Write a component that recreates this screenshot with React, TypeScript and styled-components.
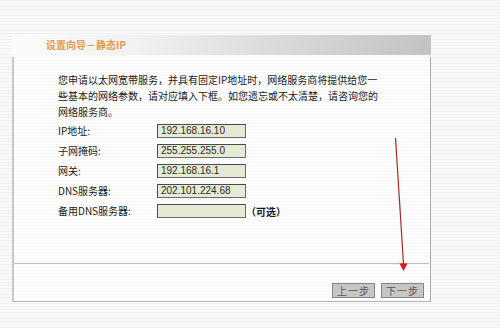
import React from "react";
import styled, { createGlobalStyle } from "styled-components";

const GlobalStyle = createGlobalStyle`
  html, body {
    margin: 0;
    padding: 0;
    width: 500px;
    height: 328px;
    overflow: hidden;
    background: repeating-linear-gradient(to bottom, #efefef 0px, #efefef 1px, #fafafa 1px, #fafafa 3px);
    font-family: "Noto Sans CJK SC", "Liberation Sans", sans-serif;
  }
  #root { position: relative; width: 500px; height: 328px; }
`;

const Page = styled.div`
  padding: 35px 0 0 12px;
  width: 419px;
`;

const Header = styled.div`
  height: 20px;
  display: flex;
  align-items: center;
  padding-left: 34px;
  background: linear-gradient(to right, #fbfbfb 0%, #f1f1f1 30%, #dcdcdc 60%, #c2c2c2 100%);
`;

const Title = styled.span`
  font-size: 10px;
  font-weight: 700;
  color: #e09b4c;
  line-height: 20px;
`;

const Panel = styled.div`
  margin-top: 2px;
  height: 244px;
  border-left: 2px solid #c9c9c9;
  border-right: 1px solid #a8a8a8;
  border-bottom: 1px solid #b4b4b4;
  display: flex;
  flex-direction: column;
  background: rgba(255, 255, 255, 0.55);
`;

const Content = styled.div`
  flex: 1;
  padding: 15px 0 0 44px;
  border-bottom: 1px solid #bdbdbd;
  margin-right: 1px;
`;

const Para = styled.p`
  margin: 0;
  font-size: 10px;
  line-height: 16px;
  color: #1a1a1a;
  white-space: nowrap;
`;

const Form = styled.div`
  margin-top: 1px;
  display: grid;
  grid-template-columns: 99px 89px auto;
  grid-auto-rows: 20px;
  align-items: center;
`;

const Label = styled.span`
  font-size: 10px;
  color: #1a1a1a;
  line-height: 20px;
  white-space: nowrap;
`;

const Field = styled.div`
  box-sizing: border-box;
  height: 14px;
  border: 1px solid #4a4a4a;
  border-right-color: #6a6a6a;
  border-bottom-color: #6a6a6a;
  background: #e4ead3;
  font-family: "Liberation Sans", Arial, sans-serif;
  font-size: 10px;
  line-height: 12px;
  color: #2a2a2a;
  padding-left: 3px;
  white-space: nowrap;
`;

const Note = styled.span`
  font-size: 10px;
  font-weight: 700;
  color: #1a1a1a;
  margin-left: 0;
  white-space: nowrap;
`;

const Footer = styled.div`
  height: 37px;
  display: flex;
  justify-content: flex-end;
  align-items: flex-end;
  gap: 6px;
  padding: 0 6px 3px 0;
  box-sizing: border-box;
`;

const Button = styled.div`
  box-sizing: border-box;
  width: 43px;
  height: 15px;
  background: #c6c6c6;
  border: 1px solid #858585;
  color: #555;
  font-size: 10px;
  line-height: 13px;
  letter-spacing: 1px;
  text-align: center;
`;

const Arrow = styled.svg`
  position: absolute;
  left: 0;
  top: 0;
  pointer-events: none;
`;

const fields = [
  { label: "IP地址:", value: "192.168.16.10" },
  { label: "子网掩码:", value: "255.255.255.0" },
  { label: "网关:", value: "192.168.16.1" },
  { label: "DNS服务器:", value: "202.101.224.68" },
  { label: "备用DNS服务器:", value: "", note: "（可选）" },
];

export default function App() {
  return (
    <>
      <GlobalStyle />
      <Page>
        <Header>
          <Title>设置向导－静态IP</Title>
        </Header>
        <Panel>
          <Content>
            <Para>
              您申请以太网宽带服务，并具有固定IP地址时，网络服务商将提供给您一
              <br />
              些基本的网络参数，请对应填入下框。如您遗忘或不太清楚，请咨询您的
              <br />
              网络服务商。
            </Para>
            <Form>
              {fields.map((f) => (
                <React.Fragment key={f.label}>
                  <Label>{f.label}</Label>
                  <Field>{f.value}</Field>
                  {f.note ? <Note>{f.note}</Note> : <span />}
                </React.Fragment>
              ))}
            </Form>
          </Content>
          <Footer>
            <Button>上一步</Button>
            <Button>下一步</Button>
          </Footer>
        </Panel>
      </Page>
      <Arrow width="500" height="328" viewBox="0 0 500 328">
        <line x1="395.5" y1="138" x2="403.5" y2="264" stroke="#a52a2a" strokeWidth="1.2" />
        <polygon points="399.5,263.5 407.5,263.5 403.5,271" fill="#e01414" />
      </Arrow>
    </>
  );
}
